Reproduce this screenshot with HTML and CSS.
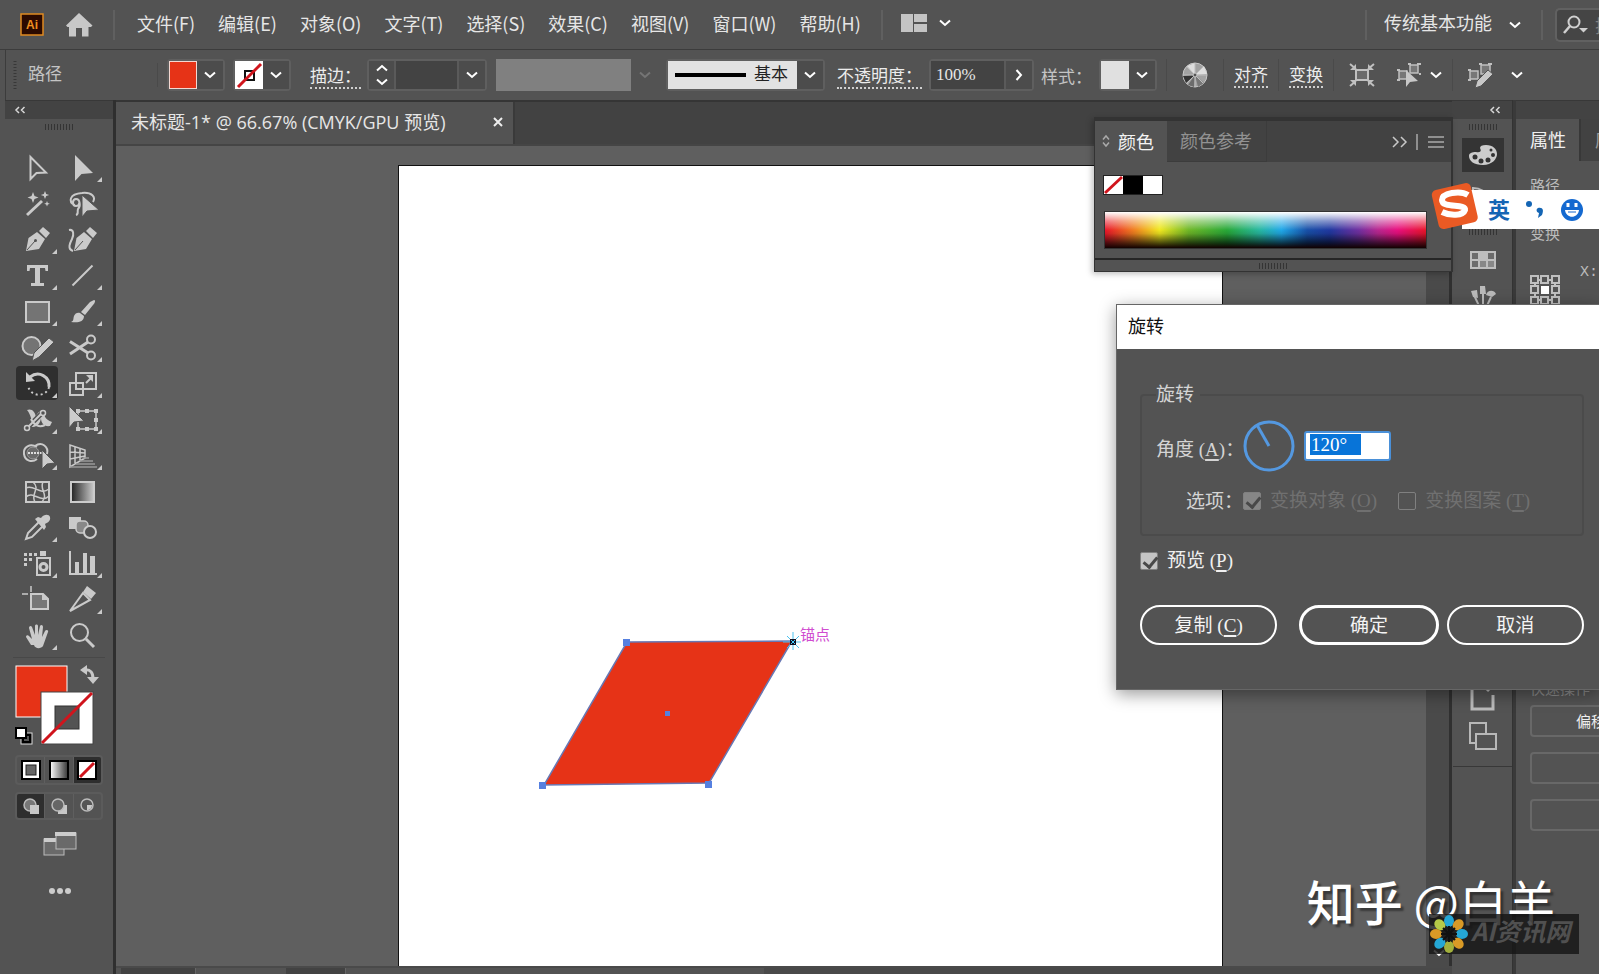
FILE: index.html
```html
<!DOCTYPE html>
<html lang="zh-CN">
<head>
<meta charset="utf-8">
<title>未标题-1</title>
<link rel="stylesheet" href="styles.css">
</head>
<body>
<svg class="defs" width="0" height="0" aria-hidden="true">
  <symbol id="chev" viewBox="0 0 12 8"><path d="M1 1.500l5 4.500 5-4.500" fill="none" stroke="currentColor" stroke-width="2"/></symbol>
  <symbol id="grip" viewBox="0 0 28 6"><path d="M.5 0v6M3.500 0v6M6.500 0v6M9.500 0v6M12.500 0v6M15.500 0v6M18.500 0v6M21.500 0v6M24.500 0v6M27.500 0v6" stroke="#343434"/></symbol>
  <symbol id="collapse" viewBox="0 0 12 8"><path d="M5 1L2 4l3 3M10.500 1l-3 3 3 3" fill="none" stroke="#d8d8d8" stroke-width="1.500"/></symbol>
</svg>

<header class="menubar">
  <svg class="logo" viewBox="0 0 24 23"><rect x="1" y="1" width="22" height="21" fill="#2b0a00" stroke="#e08a20" stroke-width="1.500"/><text x="12" y="16" text-anchor="middle" class="logo-text">Ai</text></svg>
  <svg class="home" viewBox="0 0 28 24"><path d="M14 0L1 12.500l1.500 1.500H4v9.500h7V15h6v8.500h6.500V14H26l1.500-1.500z" fill="#c8c8c8"/></svg>
  <span class="rule"></span>
  <nav class="menus">
    <button>文件(F)</button><button>编辑(E)</button><button>对象(O)</button><button>文字(T)</button><button>选择(S)</button><button>效果(C)</button><button>视图(V)</button><button>窗口(W)</button><button>帮助(H)</button>
  </nav>
  <span class="rule"></span>
  <button class="arrange" aria-label="排列文档"><svg width="26" height="18"><path d="M0 0h12v18H0zM13 0h13v8H13zM13 10h13v8H13z" fill="#c4c4c4"/></svg><svg class="chev"><use href="#chev"/></svg></button>
  <span class="rule push"></span>
  <button class="workspace"><span>传统基本功能</span><svg class="chev"><use href="#chev"/></svg></button>
  <span class="rule"></span>
  <label class="search"><svg width="26" height="20"><circle cx="11" cy="7" r="5.500" fill="none" stroke="#d0d0d0" stroke-width="2"/><path d="M7 11l-6 7" stroke="#d0d0d0" stroke-width="2.500"/><path d="M16 13h9l-4.500 4.500z" fill="#d0d0d0"/></svg><input type="text" placeholder="搜索" aria-label="搜索"></label>
</header>

<section class="control">
  <svg class="vgrip" width="4" height="28"><path d="M2 0v28" stroke="#383838" stroke-width="3" stroke-dasharray="1 2"/></svg>
  <span class="kind">路径</span>
  <div class="drop fill"><span class="swatch red"></span><button aria-label="填色"><svg class="chev"><use href="#chev"/></svg></button></div>
  <div class="drop stroke"><span class="swatch"><svg width="28" height="28"><rect width="28" height="28" fill="#fff"/><rect x="10" y="10" width="9" height="9" fill="none" stroke="#111" stroke-width="2"/><path d="M3 26L26 3" stroke="#d0141c" stroke-width="3"/></svg></span><button aria-label="描边颜色"><svg class="chev"><use href="#chev"/></svg></button></div>
  <label class="dotted weight-label" for="weight">描边<span class="colon">：</span></label>
  <div class="drop weight"><span class="step"><button aria-label="增加"><svg class="chev up"><use href="#chev"/></svg></button><button aria-label="减少"><svg class="chev"><use href="#chev"/></svg></button></span><input id="weight" type="text"><button aria-label="粗细"><svg class="chev"><use href="#chev"/></svg></button></div>
  <div class="profile"><span></span><svg class="chev"><use href="#chev"/></svg></div>
  <div class="drop brush"><span class="brush-face"><i></i>基本</span><button aria-label="画笔"><svg class="chev"><use href="#chev"/></svg></button></div>
  <label class="dotted opacity-label" for="opacity">不透明度<span class="colon">：</span></label>
  <div class="drop opacity"><input id="opacity" type="text" value="100%"><button aria-label="不透明度选项"><svg width="8" height="12"><path d="M1.500 1l4.500 5-4.500 5" fill="none" stroke="#fff" stroke-width="2"/></svg></button></div>
  <span class="style-label">样式<span class="colon">：</span></span>
  <div class="drop style"><span class="swatch pale"></span><button aria-label="样式"><svg class="chev"><use href="#chev"/></svg></button></div>
  <div class="cell wheel"><svg width="26" height="26"><circle cx="13" cy="13" r="12" fill="#a2a2a2" stroke="#c8c8c8"/><path d="M13 13V1L5 4zM13 13l9-9 3 8z" fill="#dedede"/><path d="M13 13L1 14l3 7z" fill="#333"/><path d="M13 13l-7 10 6 2z" fill="#6c6c6c"/><path d="M13 13l3 12 6-4z" fill="#777"/><path d="M13 1v24M1 13h24M4.500 4.500l17 17M21.500 4.500l-17 17" stroke="#bdbdbd"/><circle cx="13" cy="13" r="2" fill="#555" stroke="#ccc"/></svg></div>
  <div class="cell"><button class="dotted">对齐</button></div>
  <div class="cell"><button class="dotted">变换</button></div>
  <div class="cell tools-a">
    <svg width="26" height="24"><rect x="7" y="7" width="12" height="10" fill="#6a6a6a" stroke="#c0c0c0" stroke-width="2"/><path d="M1 1l6 5M25 1l-6 5M1 23l6-5M25 23l-6-5" stroke="#c0c0c0" stroke-width="2"/><g fill="#c0c0c0"><path d="M7 1v6H1zM19 1v6h6zM7 23v-6H1zM19 23v-6h6z"/></g></svg>
    <svg class="isolate" width="24" height="26"><g fill="#777" stroke="#c0c0c0" stroke-width="1.500"><rect x="2" y="9" width="8" height="8"/><rect x="13" y="3" width="8" height="8"/></g><path d="M0 8h3M0 18h3M11 2h3M20 2h4M22 12h2" stroke="#c0c0c0" stroke-width="2"/><path d="M9 8v17l4-5 8-1z" fill="#c8c8c8"/></svg>
    <svg class="chev"><use href="#chev"/></svg>
  </div>
  <div class="cell tools-b">
    <svg width="26" height="26"><g fill="#777" stroke="#c0c0c0" stroke-width="1.500"><rect x="2" y="9" width="8" height="8"/><rect x="13" y="3" width="9" height="9"/></g><path d="M0 8h3M0 18h3M11 2h3M20 2h4" stroke="#c0c0c0" stroke-width="2"/><path d="M7 26l2-7L20 8l5 4-12 12z" fill="#c8c8c8" stroke="#535353"/></svg>
    <svg class="chev"><use href="#chev"/></svg>
  </div>
</section>

<main class="work">
  <aside class="tools">
    <div class="strip"><svg width="12" height="8"><use href="#collapse"/></svg></div>
    <svg class="grip" width="28" height="6"><use href="#grip"/></svg>
    <div class="toolgrid">
      <button aria-label="选择"><svg><path class="l" d="M14.500 7v22l6-6 9.500-.5z"/></svg></button>
      <button aria-label="直接选择"><svg><path class="f" d="M14 5v26l6.500-7 11.500-1z"/><path class="f" d="M41 27v5h-5z"/></svg></button>
      <button aria-label="魔棒"><svg><path class="l thick" d="M11 29l15-14"/><path class="f" d="M17 6l1.500 4 4 1.500-4 1.500-1.500 4-1.500-4-4-1.500 4-1.500zM29 5l1.200 3 3 1-3 1-1.200 3-1.200-3-3-1 3-1zM31 15l.8 2 2 .8-2 .8-.8 2-.8-2-2-.8 2-.8z"/></svg></button>
      <button aria-label="套索"><svg><path class="l" d="M14 19c-7-3-6-11 7-12 10-1 14 4 11 9M15 13c5 0 4 7 0 7s-4-7 0-7c4 0 5 7 2 10-1 3 1 5-2 6"/><path d="M21 9v22l5-6 12-1z" fill="#cacaca" stroke="#535353"/></svg></button>
      <button aria-label="钢笔"><svg><path class="f" d="M10 29l2.500-13L21 10l8 7-6 10zM23 9l4-4 7 6-4 5z"/><path d="M11 28l8-9" stroke="#535353"/><circle cx="19.500" cy="18.500" r="1.500" fill="#535353"/><path class="f" d="M41 27v5h-5z"/></svg></button>
      <button aria-label="曲率"><svg><path class="f" d="M13 29l2.500-13L23 10l8 7-6 10zM25 9l4-4 7 6-4 5z"/><path d="M14 28l8-9" stroke="#535353"/><path class="l" d="M8 8c5-1 5 5 3 9s-5 10 1 12"/></svg></button>
      <button aria-label="文字"><svg><path class="f" d="M11 7h21v6h-2.500l-.5-3h-5v15h4v3H15v-3h4V10h-5l-.5 3H11z"/><path class="f" d="M41 27v5h-5z"/></svg></button>
      <button aria-label="直线段"><svg><path class="l" d="M11.500 27.500l20-20"/><path class="f" d="M41 27v5h-5z"/></svg></button>
      <button aria-label="矩形"><svg><rect class="l gray" x="10" y="8" width="23" height="20"/><path class="f" d="M41 27v5h-5z"/></svg></button>
      <button aria-label="画笔"><svg><path class="f" d="M33 6c2 0 1 3-1 5l-8 10-4-3 9-10zM19 19l4 3c0 6-6 7-13 6 3-1 2-3 3-6s4-4 6-3z"/><path class="f" d="M41 27v5h-5z"/></svg></button>
      <button aria-label="Shaper"><svg><circle class="l gray" cx="15.500" cy="16" r="9"/><path d="M16 31l2-8L33 8l5 4-15 15z" fill="#ccc" stroke="#535353"/><path class="f" d="M41 27v5h-5z"/></svg></button>
      <button aria-label="剪刀"><svg><circle class="l" cx="30" cy="9.500" r="4"/><circle class="l" cx="30" cy="25.500" r="4"/><path class="l thick" d="M9 11.500l18 11.500M9 24l18-12"/><path class="f" d="M41 27v5h-5z"/></svg></button>
      <button class="on" aria-label="旋转"><svg><path class="l thick" d="M14 11c9-7 20 0 19 10"/><path class="f" d="M10 6v10l9-1z"/><path d="M33 21c-2 10-18 11-21-1" fill="none" stroke="#ccc" stroke-width="2" stroke-dasharray="2 3"/><path class="f" d="M41 27v5h-5z"/></svg></button>
      <button aria-label="比例缩放"><svg><rect class="l" x="15" y="7" width="20" height="16"/><rect class="l" x="9" y="17" width="13" height="12"/><path class="l" d="M25 17l6-6"/><path class="f" d="M32 9v7l-7-7z"/><path class="f" d="M41 27v5h-5z"/></svg></button>
      <button aria-label="宽度"><svg><path class="f" d="M11 8c5-2 8 2 9 7 1-4 4-7 9-6-2 3 0 9 7 11l-2 4c-6 1-9-3-9-8-1 7-6 11-12 8-1-2 3-4 2-8-1-3-2-6-4-8z"/><path d="M11 26l15-15" stroke="#535353" stroke-width="5"/><path class="l" d="M11 26l15-15M15 17c3 6 8 9 14 6"/><circle cx="11" cy="26" r="2.500" fill="#535353" stroke="#ccc" stroke-width="1.500"/><circle cx="27" cy="11" r="2.500" fill="#535353" stroke="#ccc" stroke-width="1.500"/><path class="f" d="M41 27v5h-5z"/></svg></button>
      <button aria-label="自由变换"><svg><rect class="l thin" x="17" y="9" width="18" height="18"/><path class="f" d="M15 7h4v4h-4zM24 7h4v4h-4zM33 7h4v4h-4zM33 16h4v4h-4zM33 25h4v4h-4zM24 25h4v4h-4zM15 25h4v4h-4z"/><path d="M8 4v22l5-6 10-1z" fill="#ccc" stroke="#535353"/><path class="f" d="M41 27v5h-5z"/></svg></button>
      <button aria-label="形状生成器"><svg><path class="l" d="M19 8c7-5 14 1 12 8M21 21c-5 4-12 2-13-5s6-11 13-7"/><circle cx="17" cy="15" r="6" fill="#6a6a6a" stroke="#999"/><path d="M12 15h14" stroke="#ddd" stroke-width="2" stroke-dasharray="2 1"/><path d="M26 12v19l5-5 8-1z" fill="#ccc" stroke="#535353"/><path class="f" d="M41 27v5h-5z"/></svg></button>
      <button aria-label="透视网格"><svg><path class="l thin" d="M9 7v22l15-9v-8zM14 9v16M19 11v11M9 14l15 1M9 21l15-3"/><path d="M22 20h6M19 23h13M15 26h19M9 29h27" stroke="#999" stroke-width="1.500"/><path class="f" d="M41 27v5h-5z"/></svg></button>
      <button aria-label="网格"><svg><path class="l" d="M10 8h23v20H10z"/><path class="l thin" d="M17 8c8 7-3 12 2 20M27 8c-4 8 6 12-1 20M10 14c8-4 14 8 23 1M10 23c7-7 15 7 23-1"/></svg></button>
      <button aria-label="渐变"><svg><defs><linearGradient id="g1"><stop offset="0" stop-color="#222"/><stop offset="1" stop-color="#ccc"/></linearGradient></defs><rect x="10" y="8" width="23" height="20" fill="url(#g1)" stroke="#ccc" stroke-width="2"/></svg></button>
      <button aria-label="吸管"><svg><path class="l" d="M10 29l2-6 11-11 4 4-11 11z"/><path class="f" d="M19 9l3-2 3 1c3-4 8-4 9-1 1 4-3 6-5 7l1 3-2 3z"/><path class="f" d="M41 27v5h-5z"/></svg></button>
      <button aria-label="混合"><svg><path class="f" d="M8 7h12v12H8z"/><rect x="15" y="11" width="12" height="12" rx="4" fill="#888" stroke="#ccc" stroke-width="1.500"/><circle cx="29" cy="22" r="6" fill="#535353" stroke="#ccc" stroke-width="2"/></svg></button>
      <button aria-label="符号喷枪"><svg><rect class="l" x="21" y="12" width="13" height="17"/><circle class="l thick" cx="27.500" cy="21" r="3.500"/><path class="f" d="M24 5h6v5h-6zM8 7h3v3H8zM13 7h3v3h-3zM18 7h3v3h-3zM8 12h3v3H8zM13 12h3v3h-3zM8 17h3v3H8z"/><path class="f" d="M41 27v5h-5z"/></svg></button>
      <button aria-label="柱形图"><svg><path class="l" d="M9 5v23h27"/><path class="f" d="M14 16h4v12h-4zM22 7h4v21h-4zM29 10h5v18h-5z"/><path class="f" d="M41 27v5h-5z"/></svg></button>
      <button aria-label="画板"><svg><path d="M15 12h12l5 5v10H15z" fill="#777" stroke="#ccc" stroke-width="2"/><path class="f" d="M26 11v7h7z"/><path class="l thin" d="M15 4v6M6 12h6"/></svg></button>
      <button aria-label="切片"><svg><path class="l" d="M9 29l13-18 7 7z"/><path class="f" d="M22 10l4-6 9 7-5 6z"/><path class="f" d="M41 27v5h-5z"/></svg></button>
      <button aria-label="抓手"><svg><path class="f" d="M15 27l-5-8c0-2 2-2 3-1l3 3-3-11c0-2 2-3 3-1l3 8V8c0-2 3-2 3 0v9l2-9c1-2 3-1 3 1l-1 10 3-6c1-2 4-1 3 1l-5 14c-2 3-8 3-9-1z"/><path class="f" d="M41 27v5h-5z"/></svg></button>
      <button aria-label="缩放"><svg><circle class="l" cx="18.500" cy="14.500" r="8.500"/><path class="l thick" d="M25 21l8 8"/></svg></button>
    </div>
    <div class="paint">
      <svg width="88" height="84"><rect x="1" y="1" width="51" height="51" fill="#e63317" stroke="#fff"/><rect x="26" y="27" width="52" height="52" fill="#fff" stroke="#444"/><rect x="40" y="41" width="24" height="23" fill="#535353" stroke="#333"/><path d="M27 78L77 28" stroke="#d0141c" stroke-width="3"/><path d="M69 5c7-1 9 3 9 9" fill="none" stroke="#c8c8c8" stroke-width="3"/><path d="M65 5l7-5v10zM78 19l-6-7h12z" fill="#c8c8c8"/><rect x="6" y="68" width="11" height="11" fill="#000" stroke="#ddd"/><rect x="9" y="71" width="5" height="5" fill="#535353"/><rect x="1" y="63" width="10" height="10" fill="#fff" stroke="#000" stroke-width="2"/></svg>
    </div>
    <div class="modes">
      <button aria-label="颜色"><svg width="20" height="20"><rect x="1" y="1" width="18" height="18" fill="#fff" stroke="#000" stroke-width="2"/><rect x="5" y="5" width="10" height="10" fill="#666" stroke="#222"/></svg></button>
      <button aria-label="渐变填色"><svg width="20" height="20"><defs><linearGradient id="g2"><stop offset="0" stop-color="#fff"/><stop offset="1" stop-color="#333"/></linearGradient></defs><rect x="1" y="1" width="18" height="18" fill="url(#g2)" stroke="#000" stroke-width="2"/></svg></button>
      <button class="on" aria-label="无"><svg width="20" height="20"><rect x="1" y="1" width="18" height="18" fill="#fff" stroke="#000" stroke-width="2"/><path d="M3 17L17 3" stroke="#d0141c" stroke-width="3"/></svg></button>
    </div>
    <div class="modes draw">
      <button class="on" aria-label="正常绘图"><svg width="18" height="18"><circle cx="8" cy="8" r="6" fill="#777" stroke="#bbb" stroke-width="1.500"/><path d="M8 8h9v9H8z" fill="#c8c8c8"/></svg></button>
      <button aria-label="背面绘图"><svg width="18" height="18"><path d="M8 8h9v9H8z" fill="#c8c8c8"/><circle cx="8" cy="8" r="6" fill="#666" stroke="#bbb" stroke-width="1.500"/></svg></button>
      <button aria-label="内部绘图"><svg width="18" height="18"><circle cx="9" cy="8" r="6" fill="#555" stroke="#bbb" stroke-width="1.500"/><path d="M9 8h5c0 3-2 5-5 5z" fill="#c8c8c8"/></svg></button>
    </div>
    <button class="screen" aria-label="更改屏幕模式"><svg width="34" height="26"><rect x="1" y="8" width="20" height="16" fill="#6a6a6a" stroke="#bbb"/><path d="M1 7h20v4H1z" fill="#ccc"/><rect x="13" y="2" width="20" height="16" fill="#6a6a6a" stroke="#bbb"/><path d="M12 1h21v4H12z" fill="#ccc"/></svg></button>
    <button class="more" aria-label="编辑工具栏"><svg width="22" height="6"><circle cx="3" cy="3" r="3"/><circle cx="11" cy="3" r="3"/><circle cx="19" cy="3" r="3"/></svg></button>
  </aside>

  <section class="doc">
    <div class="tabs"><div class="tab"><span>未标题-1* @ 66.67% (CMYK/GPU 预览)</span><button aria-label="关闭"><svg width="10" height="10"><path d="M1 1l8 8M9 1L1 9" stroke="#eee" stroke-width="2"/></svg></button></div></div>
    <div class="canvas">
      <div class="artboard">
        <svg class="shape" width="300" height="170"><path d="M91 14L256 13 173 155 8 157z" fill="#e63317" stroke="#6878b4" stroke-width="1.500"/><path d="M257 4v18M247 14h18M251 8l12 12M263 8l-12 12" stroke="#4cc3f0"/><path d="M87 11h7v7h-7zM3 154h7v7H3zM169 153h7v7h-7zM129 83h5v5h-5z" fill="#5580e0"/><rect x="254" y="11" width="6" height="6" fill="#112"/><path d="M255 12l4 4M259 12l-4 4" stroke="#4cf"/></svg>
        <span class="hint">锚点</span>
      </div>
      <div class="vscroll"><svg class="chev"><use href="#chev"/></svg></div>
    </div>
    <footer class="status"><span class="zoom-box"></span><span class="board-box"></span><span class="hscroll"></span></footer>
  </section>

  <aside class="dock">
    <div class="strip end"><svg width="12" height="8"><use href="#collapse"/></svg></div>
    <div class="dockbody">
      <svg class="grip" width="28" height="6"><use href="#grip"/></svg>
      <button class="on" aria-label="颜色"><svg width="28" height="22"><path d="M17 1c7 0 11 4 11 9s-5 11-14 11S0 17 0 12c0-3 3-4 7-4 6 1 5-2 4-4 0-2 2-3 6-3z" fill="#ccc"/><g fill="#333"><circle cx="6" cy="13" r="2.500"/><circle cx="12" cy="17" r="2.500"/><circle cx="19" cy="16" r="2.500"/><circle cx="24" cy="11" r="2"/><circle cx="22" cy="6" r="1.500"/></g></svg></button>
      <button class="guide" aria-label="颜色参考"><svg width="28" height="22"><path d="M4 20V2c8 0 13 4 16 10z" fill="none" stroke="#bbb" stroke-width="2"/></svg></button>
      <svg class="grip second" width="28" height="6"><use href="#grip"/></svg>
      <button aria-label="色板"><svg width="26" height="18"><path d="M0 0h26v18H0z" fill="#bebebe"/><path d="M2 2h6v6H2zM18 2h6v6h-6zM2 10h6v6H2z" fill="#6c6c6c"/><path d="M10 10h6v6h-6zM18 10h6v6h-6z" fill="#888"/></svg></button>
      <button aria-label="画笔面板"><svg width="26" height="22"><path d="M10 22L4 9M13 22V8M16 22l5-11" stroke="#bbb" stroke-width="2"/><path d="M1 5l6-1 1 8-5-1zM10 0h5l1 8h-6zM16 9c1-5 8-6 10-1l-4 3z" fill="#bbb"/></svg></button>
      <div class="lower">
        <button aria-label="导出"><svg width="26" height="30"><path d="M2 5v23h21V14M13 5h4M17 10l8-8" fill="none" stroke="#bbb" stroke-width="3"/></svg></button>
        <button aria-label="画板面板"><svg width="28" height="28"><rect x="1" y="1" width="16" height="20" fill="none" stroke="#b8b8b8" stroke-width="2"/><rect x="7" y="12" width="20" height="15" fill="#535353" stroke="#b8b8b8" stroke-width="2"/></svg></button>
      </div>
    </div>
  </aside>

  <aside class="props">
    <div class="strip"></div>
    <div class="ptabs"><button class="on">属性</button><button>库</button></div>
    <div class="pbody">
      <h2>路径</h2>
      <h2>变换</h2>
      <div class="xrow"><svg width="30" height="30" fill="none" stroke="#c0c0c0" stroke-width="2"><path d="M5 5h20v20H5z" /><g fill="#535353"><path d="M1 1h7v7H1zM11 1h7v7h-7zM22 1h7v7h-7zM1 11h7v7H1zM22 11h7v7h-7zM1 22h7v7H1zM11 22h7v7h-7zM22 22h7v7h-7z"/></g><path d="M12 12h6v6h-6z" fill="#fff" stroke="#fff"/></svg><label for="px">X:</label><input id="px" type="text"></div>
      <div class="quick"><h2>快速操作</h2><button>偏移路径</button><button></button><button></button></div>
    </div>
  </aside>

  <section class="colorpanel">
    <div class="ctabs">
      <button class="on"><svg width="8" height="14"><path d="M1 5.500L4 2l3 3.500M1 8.500L4 12l3-3.500" fill="none" stroke="#aaa" stroke-width="1.500"/></svg>颜色</button><button>颜色参考</button>
      <span class="ctools"><svg width="52" height="16"><path d="M1 3l5 5-5 5M9 3l5 5-5 5" fill="none" stroke="#c8c8c8" stroke-width="1.500"/><path d="M25 0v16" stroke="#aaa" stroke-width="1.500"/><path d="M36 3h16M36 8h16M36 13h16" stroke="#aaa" stroke-width="1.500"/></svg></span>
    </div>
    <div class="cbody">
      <svg width="60" height="20"><rect x="0" y="0" width="60" height="20" fill="#222"/><path d="M1 1h19v18H1zM40 1h19v18H40z" fill="#fff"/><path d="M20 1h20v18H20z" fill="#000"/><path d="M2 18L19 2" stroke="#d0141c" stroke-width="3"/></svg>
      <div class="spectrum"></div>
    </div>
    <div class="cfoot"><svg width="28" height="6"><use href="#grip"/></svg></div>
  </section>
</main>

<div class="ime">
  <svg width="50" height="50"><rect x="5" y="4" width="40" height="40" rx="5" fill="#ea5a24" transform="rotate(-13 25 25)"/><path d="M38 13c-8-5-26-2-26 5 0 9 24 3 23 10-2 6-15 6-23 2" fill="none" stroke="#fff" stroke-width="6"/></svg>
  <span>英</span>
  <svg width="20" height="20"><circle cx="4" cy="4" r="3" fill="#1465b4"/><path d="M13 8c5-1 6 2 4 7l-4 3 1-5c-3-1-3-4-1-5z" fill="#1465b4"/></svg>
  <svg width="24" height="24"><circle cx="12" cy="12" r="11" fill="#1469d0"/><path d="M5 12h14c-1 9-13 9-14 0z" fill="#fff"/><path d="M8 5v4M16 5v4" stroke="#fff" stroke-width="3"/><path d="M8 14h8" stroke="#1469d0"/></svg>
  <svg width="4" height="6"><circle cx="4" cy="3" r="3" fill="#1469d0"/></svg>
</div>

<form class="dialog" role="dialog" aria-label="旋转">
  <h1>旋转</h1>
  <div class="dbody">
    <fieldset>
      <legend>旋转</legend>
      <div class="angle"><label for="angle">角度 (<u>A</u>)<span class="colon">：</span></label><svg width="52" height="52"><circle cx="26" cy="26" r="24" fill="none" stroke="#5498e0" stroke-width="3"/><path d="M26 26L14 5" stroke="#5498e0" stroke-width="3"/></svg><span class="field"><input id="angle" type="text" value="120°"></span></div>
      <div class="opts"><span>选项<span class="colon">：</span></span><label><input type="checkbox" checked disabled>变换对象 (<u>O</u>)</label><label class="pattern"><input type="checkbox" disabled>变换图案 (<u>T</u>)</label></div>
    </fieldset>
    <label class="preview"><input type="checkbox" checked>预览 (<u>P</u>)</label>
    <div class="actions"><button type="button"><span>复制 (<u>C</u>)</span></button><button type="button" class="ok"><span>确定</span></button><button type="button"><span>取消</span></button></div>
  </div>
</form>

<div class="credit">知乎 <span>@白羊</span></div>
<div class="badge"><svg width="40" height="40" viewBox="-20 -20 40 40"><ellipse cy="-13" rx="5" ry="6" fill="#25a7d5"/><ellipse cy="-13" rx="5" ry="6" fill="#d99a26" transform="rotate(45)"/><ellipse cy="-13" rx="5" ry="6" fill="#25a7d5" transform="rotate(90)"/><ellipse cy="-13" rx="5" ry="6" fill="#d99a26" transform="rotate(135)"/><ellipse cy="-13" rx="5" ry="6" fill="#a3b13c" transform="rotate(180)"/><ellipse cy="-13" rx="5" ry="6" fill="#25a7d5" transform="rotate(225)"/><ellipse cy="-13" rx="5" ry="6" fill="#d99a26" transform="rotate(270)"/><ellipse cy="-13" rx="5" ry="6" fill="#b5c948" transform="rotate(315)"/><path d="M0-8V8M-8 0H8M-6-6L6 6M6-6L-6 6" stroke="#111" stroke-width="2"/></svg><span>AI资讯网</span></div>
</body>
</html>
```

FILE: styles.css
```css
* { box-sizing: border-box; }
html, body { height: 100%; }
body {
  margin: 0;
  display: flex;
  flex-direction: column;
  position: relative;
  overflow: hidden;
  background: #535353;
  color: #e6e6e6;
  font: 18px/24px "Noto Sans CJK SC", sans-serif;
}
button, input { font: inherit; color: inherit; }
button { background: none; border: 0; padding: 0; white-space: nowrap; }
h1, h2 { margin: 0; font-weight: 400; }
svg { display: block; flex: none; }
.defs { position: absolute; }
.chev { width: 12px; height: 8px; color: #fff; }
.up { transform: rotate(180deg); }
.colon { font-family: "Noto Sans CJK TC", sans-serif; }

/* menu bar */
.menubar { display: flex; align-items: center; height: 50px; padding-left: 20px; border-bottom: 1px solid #3c3c3c; flex: none; }
.logo { width: 24px; height: 23px; }
.logo-text { font: bold 12px "Liberation Sans", sans-serif; fill: #f09020; }
.home { width: 28px; height: 24px; margin-left: 21px; }
.rule { width: 2px; height: 30px; background: #606060; margin-left: 20px; }
.menus { display: flex; gap: 23px; margin-left: 22px; padding-bottom: 4px; }
.arrange { display: flex; align-items: center; gap: 12px; margin-left: 18px; padding-bottom: 4px; }
.push { margin-left: auto; }
.workspace { display: flex; align-items: center; gap: 17px; margin-left: 17px; }
.workspace span { padding-bottom: 6px; }
.search { display: flex; align-items: center; width: 44px; height: 34px; margin-left: 12px; padding-left: 6px; background: #454545; border: 2px solid #616161; border-right: 0; border-radius: 5px 0 0 5px; overflow: hidden; }
.search input { width: 40px; flex: none; margin-left: 6px; padding: 0; border: 0; background: none; }
.search input::placeholder { color: #808080; }

/* control bar */
.control { display: flex; align-items: center; height: 50px; margin-left: 5px; padding-left: 7px; border-left: 1px solid #3c3c3c; flex: none; font-family: "Liberation Serif", "Noto Sans CJK SC", serif; font-size: 17px; white-space: nowrap; }
.kind { width: 130px; margin-left: 11px; color: #c4c4c4; border-right: 1px solid #4a4a4a; }
.drop { display: flex; height: 32px; border: 2px solid #5f5f5f; border-radius: 4px; background: #454545; }
.drop > button { width: 26px; display: flex; align-items: center; justify-content: center; background: #4c4c4c; }
.drop input { border: 0; padding: 0 5px; background: #434343; min-width: 0; }
.swatch { width: 28px; height: 28px; }
.red { background: #e63317; border: 1px solid #f4d8d2; }
.pale { background: #e0e0e0; }
.fill { margin-left: 9px; }
.stroke { margin-left: 8px; }
.dotted { border-bottom: 2px dotted #d0d0d0; line-height: 20px; padding-top: 4px; color: #ececec; }
.weight-label { margin-left: 19px; }
.weight { margin-left: 6px; }
.weight input { width: 65px; border-left: 2px solid #5a5a5a; border-right: 2px solid #5a5a5a; }
.step { display: flex; flex-direction: column; justify-content: space-around; width: 25px; background: #4c4c4c; }
.step button { display: flex; justify-content: center; }
.profile { display: flex; align-items: center; gap: 8px; margin-left: 9px; }
.profile span { width: 135px; height: 32px; background: #808080; }
.profile .chev { color: #757575; }
.brush { margin-left: 15px; }
.brush-face { display: flex; align-items: center; gap: 8px; width: 129px; padding-left: 7px; background: #e2e2e2; color: #222; }
.brush-face i { width: 71px; height: 4px; background: #000; }
.opacity-label { margin-left: 12px; }
.opacity { margin-left: 7px; }
.opacity input { width: 75px; border-right: 2px solid #5a5a5a; }
.style-label { margin-left: 7px; padding-top: 4px; color: #c4c4c4; }
.style { margin-left: 7px; }
.cell { display: flex; align-items: center; height: 32px; padding: 0 10px; border-right: 1px solid #4a4a4a; }
.wheel { margin-left: 9px; padding: 0 15px; border-left: 1px solid #4a4a4a; }
.tools-a { padding-left: 15px; }
.isolate { margin-left: 22px; margin-right: 9px; }
.tools-b { gap: 17px; padding-left: 15px; border: 0; }

/* work area */
.work { display: flex; flex: 1; min-height: 0; position: relative; }
.strip { display: flex; align-items: center; height: 19px; padding-left: 9px; background: #434343; border-top: 1px solid #383838; }
.strip.end { justify-content: flex-end; padding-right: 11px; }
.tools { width: 116px; flex: none; padding-left: 5px; border-right: 3px solid #2f2f2f; }
.grip { margin: 5px auto 0; }
.toolgrid { display: grid; grid-template-columns: 42px 42px; grid-auto-rows: 36px; gap: 0 3px; padding: 20px 0 3px 11px; }
.toolgrid button { display: flex; }
.toolgrid svg { width: 42px; height: 36px; }
.toolgrid .on { background: #2f2f2f; border-radius: 4px; height: 34px; }
.f { fill: #cacaca; }
.l { fill: none; stroke: #cacaca; stroke-width: 2; }
.thin { stroke-width: 1.5; }
.thick { stroke-width: 3; }
.gray { fill: #747474; }
.paint { margin-left: 8px; padding: 7px 0 0 2px; width: 92px; border-top: 1px solid #484848; }
.modes { display: flex; width: 88px; height: 30px; margin: 6px 0 0 10px; border: 2px solid #5b5b5b; border-radius: 4px; overflow: hidden; }
.modes button { flex: 1; display: flex; align-items: center; justify-content: center; }
.modes button + button { border-left: 1px solid #5f5f5f; }
.modes .on { background: #2e2e2e; }
.draw { height: 28px; margin-top: 7px; }
.screen { display: block; margin: 11px 0 0 38px; }
.more { display: block; margin: 31px 0 0 44px; fill: #ccc; }

.doc { flex: 1; min-width: 0; display: flex; flex-direction: column; }
.tabs { display: flex; height: 46px; flex: none; background: #424242; border-top: 2px solid #353535; border-bottom: 2px solid #454545; }
.tab { display: flex; align-items: center; justify-content: space-between; width: 399px; padding: 0 10px 2px 15px; background: #535353; border-right: 2px solid #3a3a3a; font-family: "Open Sans", "Noto Sans CJK SC", sans-serif; white-space: nowrap; }
.canvas { flex: 1; min-height: 0; position: relative; background: #5f5f5f; overflow: hidden; }
.artboard { position: absolute; left: 282px; top: 19px; bottom: 0; width: 825px; background: #fff; border: 1px solid #111; border-bottom: 0; }
.shape { position: absolute; left: 137px; top: 462px; }
.hint { position: absolute; left: 401px; top: 456px; font-size: 15px; color: #d04cd0; }
.vscroll { position: absolute; right: 0; top: 0; bottom: 0; width: 26px; padding: 0 7px 9px; display: flex; align-items: flex-end; background: #4a4a4a; border-right: 3px solid #303030; }
.status { display: flex; height: 8px; flex: none; padding-left: 5px; background: #535353; border-top: 2px solid #4a4a4a; }
.zoom-box { width: 75px; background: #424242; border-right: 1px solid #666; }
.board-box { width: 60px; margin-left: 90px; background: #424242; border-right: 1px solid #666; }
.hscroll { flex: 1; margin-left: 418px; background: #494949; }

.dock { width: 61px; flex: none; border-right: 1px solid #333; }
.dockbody { margin-left: 1px; height: 643px; border-bottom: 1px solid #383838; }
.dockbody > .grip { margin: 5px auto 8px; }
.dockbody button { display: flex; align-items: center; justify-content: center; width: 42px; height: 34px; margin: 0 auto 3px 9px; }
.dockbody .on { background: #343434; }
.dockbody .guide { height: 44px; margin: 0 0 0 9px; }
.dockbody > .second { margin: 10px auto 8px; }
.lower { padding-top: 360px; }
.lower button { height: 37px; }

.props { width: 86px; flex: none; overflow: hidden; border-left: 3px solid #3a3a3a; white-space: nowrap; }
.ptabs { display: flex; height: 42px; background: #424242; }
.ptabs button { flex: none; padding: 0 13px 2px 14px; color: #999; border-right: 2px solid #383838; }
.ptabs .on { background: #535353; color: #f0f0f0; }
.pbody { padding: 12px 0 0 14px; font-size: 15px; color: #bbb; }
.pbody h2 { font-size: 15px; line-height: 24px; margin-bottom: 24px; }
.xrow { display: flex; height: 30px; margin-top: 6px; padding-top: 6px; font-family: "Liberation Mono", monospace; }
.xrow label { margin: -14px 0 0 20px; }
.xrow input { width: 40px; border: 0; background: none; }
.quick { padding-top: 379px; }
.quick h2 { margin: 0 0 7px; line-height: 20px; color: #8a8a8a; }
.quick button { display: block; width: 152px; height: 32px; margin-bottom: 15px; border: 2px solid #686868; border-radius: 4px; color: #eee; }

/* floating colour panel */
.colorpanel { position: absolute; right: 146px; top: 17px; width: 359px; background: #535353; border: 1px solid #333; border-top: 4px solid #333; border-right: 2px solid #333; box-shadow: -2px 2px 6px rgba(0,0,0,.25); }
.ctabs { display: flex; align-items: stretch; height: 41px; background: #424242; }
.ctabs button { display: flex; align-items: center; gap: 8px; padding: 0 14px 2px 13px; color: #929292; border-right: 1px solid #3c3c3c; border-bottom: 1px solid #3c3c3c; }
.ctabs .on { padding: 0 13px 2px 7px; background: #535353; color: #f4f4f4; border: 0; }
.ctools { flex: 1; display: flex; align-items: center; justify-content: flex-end; padding-right: 7px; }
.cbody { padding: 13px 24px 9px 8px; border-bottom: 2px solid #262626; }
.spectrum { height: 38px; margin: 16px 0 0 1px; border: 1px solid #333; background:
  linear-gradient(to bottom, #fff 0%, rgba(255,255,255,.45) 25%, rgba(255,255,255,0) 50%, rgba(0,0,0,.1) 60%, rgba(0,0,0,.65) 85%, #100 100%),
  linear-gradient(to right, #e8152a 0%, #f08020 9%, #f0e820 17%, #70b828 26%, #28a838 38%, #28b8a0 48%, #20a8e8 55%, #1850a8 63%, #2038a0 70%, #7030a0 79%, #b82890 85%, #e81080 91%, #e8152a 100%); }
.cfoot { display: flex; justify-content: center; align-items: center; height: 11px; }

/* input method bar */
.ime { position: absolute; right: 0; top: 190px; width: 169px; height: 39px; display: flex; align-items: center; gap: 15px; background: linear-gradient(to right, transparent 32px, #fff 32px); color: #1465b4; font-size: 22px; font-weight: 700; }
.ime > svg:first-child { margin-top: -6px; }
.ime > span { margin: -4px 0 0 -7px; }

/* rotate dialog */
.dialog { position: absolute; right: 0; top: 304px; width: 483px; background: #535353; border: 1px solid #666; border-right: 0; box-shadow: 0 4px 16px rgba(0,0,0,.4); font-family: "Liberation Serif", "Noto Sans CJK SC", serif; font-size: 19px; white-space: nowrap; }
.dialog h1 { padding: 10px 11px; background: #fff; color: #111; font-size: 18px; line-height: 24px; }
.dbody { padding: 34px 15px 44px 23px; }
.dialog fieldset { margin: 0; padding: 13px 12px 0 14px; height: 153px; border: 2px solid #4b4b4b; border-radius: 4px; color: #d4d4d4; }
.dialog legend { padding: 0 6px 0 0; line-height: 24px; }
.dialog u { text-decoration-thickness: 2px; text-underline-offset: 3px; }
.angle { display: flex; align-items: center; height: 52px; }
.angle label { width: 87px; padding-top: 6px; }
.field { display: flex; align-items: center; width: 87px; height: 30px; margin-left: 9px; background: #fff; border: 2px solid #4a90d8; border-radius: 3px; padding: 0 0 3px 4px; }
.field input { width: 51px; height: 21px; padding: 0 1px; border: 0; background: #0874d8; color: #fff; }
.opts { display: flex; align-items: center; height: 24px; margin-top: 17px; padding-left: 30px; }
.opts > span { width: 57px; }
.opts label { display: flex; align-items: center; color: #707070; white-space: pre; }
.opts .pattern { margin-left: 21px; }
.dialog input[type="checkbox"] { appearance: none; width: 18px; height: 18px; margin: 0 9px 0 0; border: 1px solid #808080; border-radius: 2px; position: relative; flex: none; }
.dialog input[type="checkbox"]:checked { background: #c4c4c4; }
.dialog input[type="checkbox"]:disabled:checked { background: #868686; }
.dialog input[type="checkbox"]:checked::after { content: ""; position: absolute; left: 5px; top: 1px; width: 6px; height: 11px; border: solid #484848; border-width: 0 3px 3px 0; transform: rotate(40deg); }
.preview { display: flex; align-items: center; height: 24px; margin-top: 13px; color: #f0f0f0; white-space: pre; }
.actions { display: flex; margin-top: 32px; gap: 8px; }
.actions button { flex: 1; height: 40px; padding-top: 2px; border: 2px solid #fff; border-radius: 20px; color: #f4f4f4; }
.actions .ok { margin-left: 14px; border-width: 3px; }

/* watermarks */
.credit { position: absolute; right: 44px; bottom: 46px; font-size: 48px; line-height: 56px; font-weight: 500; color: #fff; text-shadow: 3px 3px 2px rgba(0,0,0,.4); white-space: nowrap; }
.credit span { font-weight: 400; }
.badge { position: absolute; right: 20px; bottom: 20px; width: 150px; height: 40px; display: flex; gap: 2px; background: rgba(20,20,20,.8); color: #505050; font-size: 25px; line-height: 32px; font-weight: 700; font-style: italic; white-space: nowrap; }
```
